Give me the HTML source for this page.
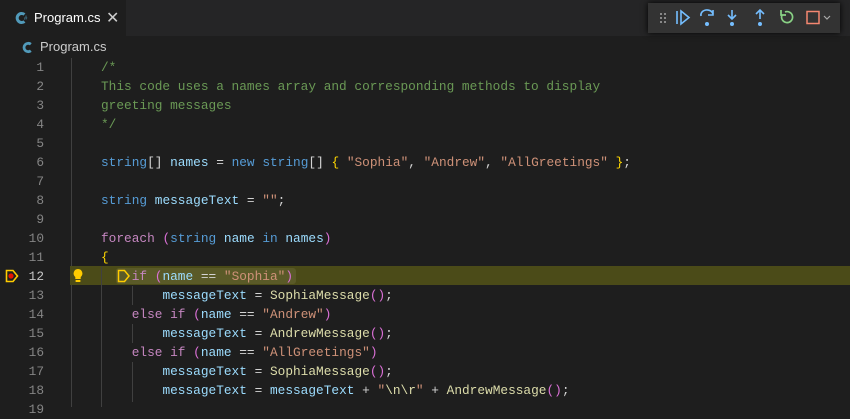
<!DOCTYPE html>
<html><head><meta charset="utf-8"><style>
*{margin:0;padding:0;box-sizing:border-box}
body{width:850px;height:407px;background:#1e1e1e;overflow:hidden;font-family:"Liberation Sans",sans-serif;position:relative}
.tabbar{position:absolute;left:0;top:0;width:850px;height:36px;background:#252526}
.tab{position:absolute;left:0;top:0;width:126px;height:36px;background:#1e1e1e;color:#fff;font-size:13px}
.crumb{position:absolute;left:22px;top:39px;color:#cccccc;font-size:13px}
.code{position:absolute;left:0;top:58px;width:850px;font-family:"Liberation Mono",monospace;font-size:12.8px}
.ln{position:absolute;left:0;width:44px;text-align:right;color:#858585;height:19px;line-height:19px}
.tx{position:absolute;left:101px;height:19px;line-height:19px;white-space:pre;color:#d4d4d4}
.c{color:#6a9955}.k{color:#569cd6}.p{color:#c586c0}.v{color:#9cdcfe}.s{color:#ce9178}.f{color:#dcdcaa}.b{color:#ffd700}.q{color:#da70d6}
.guide{position:absolute;width:1px;background:#404040}
.dbg{position:absolute;left:648px;top:3px;width:192px;height:30px;background:#333333;box-shadow:0 0 6px #000}
</style></head><body>
<div class="tabbar"></div>
<div class="tab">
<svg style="position:absolute;left:15px;top:11px" width="14" height="14" viewBox="0 0 14 14"><path d="M9.5 3.5A4.5 4.5 0 1 0 9.5 10.5" stroke="#519aba" stroke-width="3" fill="none"/><text x="9" y="9" font-size="6" fill="#519aba" font-family="Liberation Sans">#</text></svg>
<span style="position:absolute;left:34px;top:10px">Program.cs</span>
<span style="position:absolute;left:106px;top:8px;font-size:16px;color:#ccc">✕</span>
</div>
<div class="crumb"><svg style="position:absolute;left:0;top:2px" width="13" height="13" viewBox="0 0 14 14"><path d="M9.5 3.5A4.5 4.5 0 1 0 9.5 10.5" stroke="#519aba" stroke-width="3" fill="none"/></svg><span style="position:absolute;left:18px;top:0;white-space:nowrap">Program.cs</span></div>
<div style="position:absolute;left:71px;top:58px;width:1px;height:349px;background:#404040"></div>
<div style="position:absolute;left:70px;top:266px;width:780px;height:19px;background:#4b4b18"></div>
<div class="code">
<div class="ln" style="top:0">1</div><div class="tx c" style="top:0">/*</div>
<div class="ln" style="top:19px">2</div><div class="tx c" style="top:19px">This code uses a names array and corresponding methods to display</div>
<div class="ln" style="top:38px">3</div><div class="tx c" style="top:38px">greeting messages</div>
<div class="ln" style="top:57px">4</div><div class="tx c" style="top:57px">*/</div>
<div class="ln" style="top:76px">5</div>
<div class="ln" style="top:95px">6</div><div class="tx" style="top:95px"><span class="k">string</span>[] <span class="v">names</span> = <span class="k">new</span> <span class="k">string</span>[] <span class="b">{</span> <span class="s">"Sophia"</span>, <span class="s">"Andrew"</span>, <span class="s">"AllGreetings"</span> <span class="b">}</span>;</div>
<div class="ln" style="top:114px">7</div>
<div class="ln" style="top:133px">8</div><div class="tx" style="top:133px"><span class="k">string</span> <span class="v">messageText</span> = <span class="s">""</span>;</div>
<div class="ln" style="top:152px">9</div>
<div class="ln" style="top:171px">10</div><div class="tx" style="top:171px"><span class="p">foreach</span> <span class="q">(</span><span class="k">string</span> <span class="v">name</span> <span class="k">in</span> <span class="v">names</span><span class="q">)</span></div>
<div class="ln" style="top:190px">11</div><div class="tx" style="top:190px"><span class="b">{</span></div>
<div class="ln" style="top:209px;color:#c6c6c6">12</div><div class="tx" style="top:209px">    <span class="p">if</span> <span class="q">(</span><span class="v">name</span> == <span class="s">"Sophia"</span><span class="q">)</span></div>
<div class="ln" style="top:228px">13</div><div class="tx" style="top:228px">        <span class="v">messageText</span> = <span class="f">SophiaMessage</span><span class="q">()</span>;</div>
<div class="ln" style="top:247px">14</div><div class="tx" style="top:247px">    <span class="p">else</span> <span class="p">if</span> <span class="q">(</span><span class="v">name</span> == <span class="s">"Andrew"</span><span class="q">)</span></div>
<div class="ln" style="top:266px">15</div><div class="tx" style="top:266px">        <span class="v">messageText</span> = <span class="f">AndrewMessage</span><span class="q">()</span>;</div>
<div class="ln" style="top:285px">16</div><div class="tx" style="top:285px">    <span class="p">else</span> <span class="p">if</span> <span class="q">(</span><span class="v">name</span> == <span class="s">"AllGreetings"</span><span class="q">)</span></div>
<div class="ln" style="top:304px">17</div><div class="tx" style="top:304px">        <span class="v">messageText</span> = <span class="f">SophiaMessage</span><span class="q">()</span>;</div>
<div class="ln" style="top:323px">18</div><div class="tx" style="top:323px">        <span class="v">messageText</span> = <span class="v">messageText</span> + <span class="s">"<span class="f">\n\r</span>"</span> + <span class="f">AndrewMessage</span><span class="q">()</span>;</div>
<div class="ln" style="top:342px">19</div>
</div>
<div class="guide" style="left:101px;top:267px;height:140px"></div>
<div class="guide" style="left:132px;top:286px;height:19px"></div>
<div class="guide" style="left:132px;top:324px;height:19px"></div>
<div class="guide" style="left:132px;top:362px;height:40px"></div>
<!-- breakpoint -->
<svg style="position:absolute;left:5px;top:269px" width="14" height="14" viewBox="0 0 14 14"><path d="M1.5 1.5H8L12.5 7L8 12.5H1.5Z" fill="none" stroke="#ffcc00" stroke-width="1.6"/><circle cx="6" cy="7" r="2.6" fill="#e51400"/></svg>
<svg style="position:absolute;left:72px;top:268px" width="12" height="15" viewBox="0 0 12 15"><path d="M6 1a4.5 4.5 0 0 0-2.7 8v2h5.4V9A4.5 4.5 0 0 0 6 1z" fill="#ffcc00"/><rect x="3.6" y="12" width="4.8" height="2" fill="#ffcc00"/></svg>
<div style="position:absolute;left:116px;top:268px;width:180px;height:16px;background:#5a5a28;border-radius:3px"></div>
<svg style="position:absolute;left:117px;top:269px" width="14" height="14" viewBox="0 0 14 14"><path d="M1.5 1.5H7.5L12 7L7.5 12.5H1.5Z" fill="none" stroke="#ffcc00" stroke-width="1.5"/></svg>
<div class="code" style="pointer-events:none"><div class="tx" style="top:209px">    <span class="p">if</span> <span class="q">(</span><span class="v">name</span> == <span class="s">"Sophia"</span><span class="q">)</span></div></div>
<div class="dbg">
<svg width="192" height="30" viewBox="0 0 192 30">
<g fill="#888"><rect x="12" y="10" width="2" height="2"/><rect x="16" y="10" width="2" height="2"/><rect x="12" y="14" width="2" height="2"/><rect x="16" y="14" width="2" height="2"/><rect x="12" y="18" width="2" height="2"/><rect x="16" y="18" width="2" height="2"/></g>
<g stroke="#75beff" stroke-width="1.6" fill="none">
<path d="M29 8V21"/><path d="M33 8L41 14.5L33 21Z"/>
<path d="M53 13A6 5 0 0 1 65 11"/><path d="M65 7V12H60"/>
<path d="M84 7V15"/><path d="M80 12L84 16L88 12"/>
<path d="M112 16V8"/><path d="M108 11L112 7L116 11"/>
</g>
<g fill="#75beff"><circle cx="59" cy="21" r="2"/><circle cx="84" cy="21" r="2"/><circle cx="112" cy="21" r="2"/></g>
<path d="M134 12A5.5 5.5 0 1 0 137 9" stroke="#89d185" stroke-width="1.7" fill="none"/><path d="M133 7V12H138" stroke="#89d185" stroke-width="1.7" fill="none"/>
<rect x="159" y="8.5" width="12" height="12" stroke="#f48771" stroke-width="1.5" fill="none"/>
<path d="M176 13L179 16L182 13" stroke="#aaa" stroke-width="1.2" fill="none"/>
</svg>
</div>
</body></html>
